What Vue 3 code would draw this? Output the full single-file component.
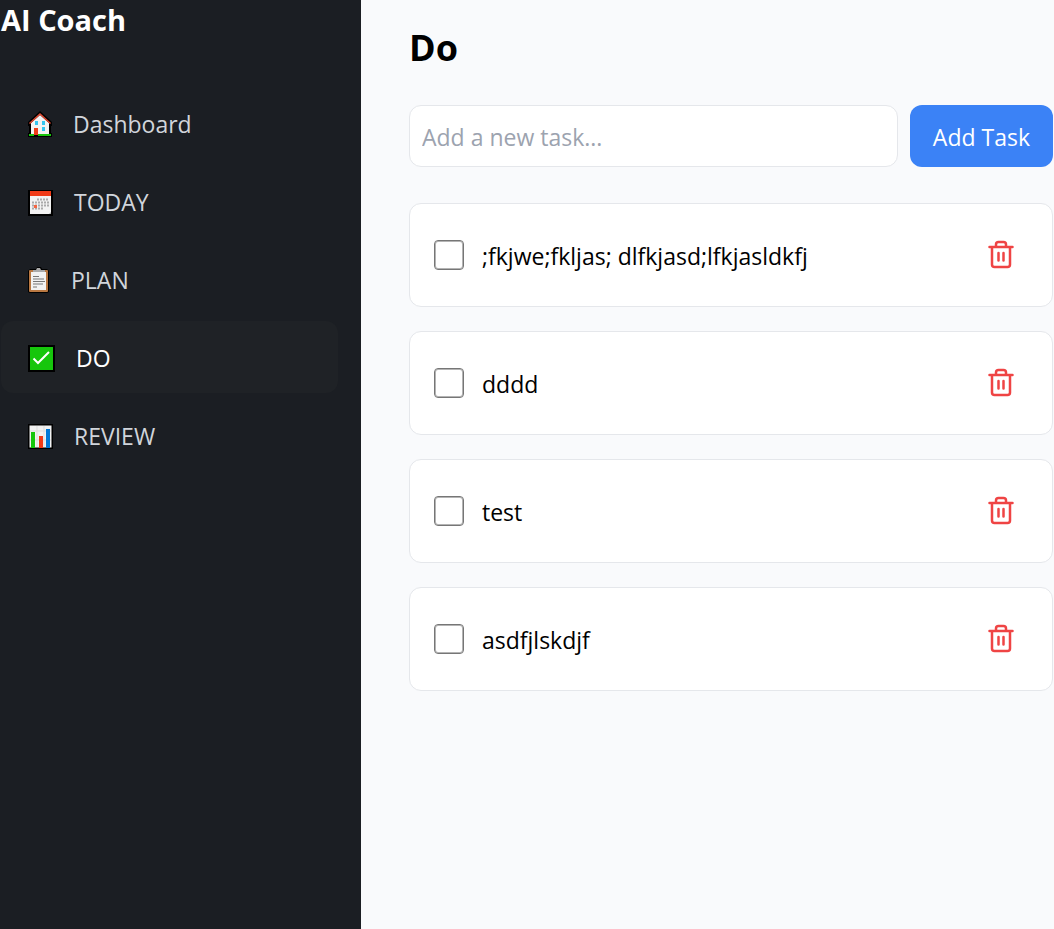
<script setup>
import { ref } from 'vue'

const draft = ref('')
const active = ref('do')
const links = [
  { id: 'dashboard', label: 'Dashboard', width: 27, top: -1 },
  { id: 'today', label: 'TODAY', width: 28, top: -1 },
  { id: 'plan', label: 'PLAN', width: 25, top: -1 },
  { id: 'do', label: 'DO', width: 30, top: 0 },
  { id: 'review', label: 'REVIEW', width: 28, top: -1 },
]
const tasks = ref([
  { id: 1, text: ';fkjwe;fkljas; dlfkjasd;lfkjasldkfj', done: false },
  { id: 2, text: 'dddd', done: false },
  { id: 3, text: 'test', done: false },
  { id: 4, text: 'asdfjlskdjf', done: false },
])
let nextId = 5

function addTask() {
  const text = draft.value.trim()
  if (!text) return
  tasks.value.push({ id: nextId++, text, done: false })
  draft.value = ''
}
function removeTask(id) {
  tasks.value = tasks.value.filter((t) => t.id !== id)
}
</script>

<template>
  <div class="layout">
    <aside class="sidebar">
      <div class="brand">AI Coach</div>
      <nav class="nav">
        <a
          v-for="link in links"
          :key="link.id"
          :href="'#' + link.id"
          class="nav-link"
          :class="{ active: active === link.id }"
          @click.prevent="active = link.id"
        >
          <svg class="nav-icon" :width="link.width" height="28" :viewBox="`0 ${link.top} ${link.width} 28`" aria-hidden="true">
            <g v-if="link.id === 'dashboard'">
              <path d="M12 0 24 11v4h-1v7h1v4H0v-4h1v-7H0v-4z" fill="#000" />
              <path d="M12 4 21 12v12H3V12z" fill="#f3f3f3" />
              <path d="M1.500 12.500 12 3 22.500 12.500" fill="none" stroke="#e04a32" stroke-width="1.500" />
              <path d="M7 10h3v4H7zM14 10h3v4h-3zM14 16h3v4h-3zM7 16h0z" fill="#35c5f0" />
              <path d="M6 17h4v7H6z" fill="#ee3c18" />
              <path d="M1 23h5v2H1zM10 23h13v2H10z" fill="#18c50c" />
            </g>
            <g v-else-if="link.id === 'today'">
              <path d="M0 1h25v26H0z" fill="#000" />
              <path d="M2 2h21v23H2z" fill="#f2f2f2" />
              <path d="M2 2h21v5H2z" fill="#f03a17" />
              <path d="M9 10.500h12M4 13.500h17M4 16.500h17M4 19.500h12" stroke="#aaa" stroke-width="2" stroke-dasharray="2 1" fill="none" />
              <path d="M6 16h3v3H6z" fill="#f56541" />
              <path d="M21 25l2-2v2z" fill="#aaa" />
            </g>
            <g v-else-if="link.id === 'plan'">
              <path d="M2 2h6l1-2h4l1 2h5l2 2v21l-2 1H2l-2-1V4z" fill="#000" />
              <rect x="1" y="3" width="19" height="22" rx="1" fill="#b97842" />
              <path d="M3 5h15v18H3z" fill="#f2f2f2" />
              <path d="M5 3h3l1-2h3l1 2h4v2H5z" fill="#aaa" />
              <path d="M5 9.500h6M5 12h11M5 14.500h12M5 17h10M5 20h4" stroke="#777" stroke-width="1.200" />
            </g>
            <g v-else-if="link.id === 'do'">
              <path d="M0 1h27v27H0z" fill="#000" />
              <path d="M2 3h23v23H2z" fill="#16c60c" />
              <path d="m5.500 14.500 4.500 4.500L21 8" fill="none" stroke="#fff" stroke-width="2" />
            </g>
            <g v-else>
              <path d="M0 1h25v25H0z" fill="#000" />
              <path d="M1.500 2.500h22v22h-22z" fill="#f2f2f2" />
              <path d="M2 8h21M2 17h21M9 3v21M16 3v21" stroke="#ddd" />
              <path d="M3 9h4v16H3z" fill="#16c60c" />
              <path d="M11 13h4v12h-4z" fill="#f03a17" />
              <path d="M18 6h4v19h-4z" fill="#0078d7" />
            </g>
          </svg>
          <span>{{ link.label }}</span>
        </a>
      </nav>
    </aside>

    <main class="content">
      <h1>Do</h1>
      <form class="add-form" @submit.prevent="addTask">
        <input v-model="draft" class="draft" type="text" placeholder="Add a new task..." aria-label="New task" />
        <button class="add" type="submit">Add Task</button>
      </form>
      <ul class="tasks">
        <li v-for="task in tasks" :key="task.id" class="task">
          <input :id="'task-' + task.id" v-model="task.done" class="check" type="checkbox" />
          <label class="task-text" :for="'task-' + task.id">{{ task.text }}</label>
          <button class="remove" type="button" :aria-label="'Delete ' + task.text" @click="removeTask(task.id)">
            <svg width="30" height="30" viewBox="0 0 30 30" fill="none" stroke="#ef4444" stroke-width="2.500" stroke-linecap="round" stroke-linejoin="round" aria-hidden="true">
              <path d="M3.500 7h23M6 7v17.500a2.500 2.500 0 0 0 2.500 2.500h13a2.500 2.500 0 0 0 2.500-2.500V7M10 7V4.500a2.500 2.500 0 0 1 2.500-2.500h5a2.500 2.500 0 0 1 2.500 2.500V7M12.500 13v7.500M17.500 13v7.500" />
            </svg>
          </button>
        </li>
      </ul>
    </main>
  </div>
</template>

<style>
body {
  background: #f9fafb;
}
</style>

<style scoped>
.layout {
  display: flex;
  min-height: 100vh;
  background: #f9fafc;
  color: #000;
  font-family: "Segoe UI", "Open Sans", "Noto Sans", sans-serif;
  font-size: 23px;
  line-height: 36px;
}
.sidebar {
  flex: 0 0 361px;
  box-sizing: border-box;
  padding: 0 23px 0 1px;
  background: #1b1e23;
}
.brand {
  color: #fff;
  font-size: 29px;
  font-weight: 700;
  line-height: 39px;
}
.nav {
  display: flex;
  flex-direction: column;
  gap: 6px;
  margin-top: 48px;
}
.nav-link {
  display: flex;
  align-items: center;
  gap: 18px;
  padding: 19px 27px 17px;
  border-radius: 12px;
  color: #d1d5db;
  text-decoration: none;
}
.nav-link.active {
  background: #1f2226;
  color: #fff;
}
.nav-icon {
  flex: none;
}
.content {
  flex: 1;
  min-width: 0;
  padding: 24px 1px 24px 48px;
}
h1 {
  margin: 0 0 33px;
  font-size: 36px;
  font-weight: 700;
  line-height: 48px;
}
.add-form {
  display: flex;
  gap: 12px;
  margin-bottom: 36px;
}
.draft {
  flex: 1;
  min-width: 0;
  box-sizing: border-box;
  height: 62px;
  padding: 2px 12px 0;
  border: 1px solid #e5e7eb;
  border-radius: 12px;
  background: #fff;
  color: #000;
  font: inherit;
}
.draft::placeholder {
  color: #9ca3af;
  opacity: 1;
}
.add {
  padding: 2px 23px 0;
  border: 0;
  border-radius: 12px;
  background: #3b82f6;
  color: #fff;
  font: inherit;
}
.tasks {
  display: flex;
  flex-direction: column;
  gap: 24px;
  margin: 0;
  padding: 0;
  list-style: none;
}
.task {
  display: flex;
  align-items: center;
  box-sizing: border-box;
  min-height: 104px;
  padding: 24px;
  border: 1px solid #e5e7eb;
  border-radius: 12px;
  background: #fff;
}
.check {
  appearance: none;
  flex: none;
  box-sizing: border-box;
  width: 30px;
  height: 30px;
  margin: 0 18px 0 0;
  border: 1px solid #767676;
  border-radius: 4px;
  background: #fff;
  box-shadow: inset 0 0 0 1px #b4b4b4;
}
.check:checked {
  background: #3b82f6;
  border-color: #3b82f6;
}
.task-text {
  flex: 1;
  min-width: 0;
  padding-top: 2px;
}
.remove {
  display: flex;
  padding: 12px;
  border: 0;
  background: none;
}
</style>
